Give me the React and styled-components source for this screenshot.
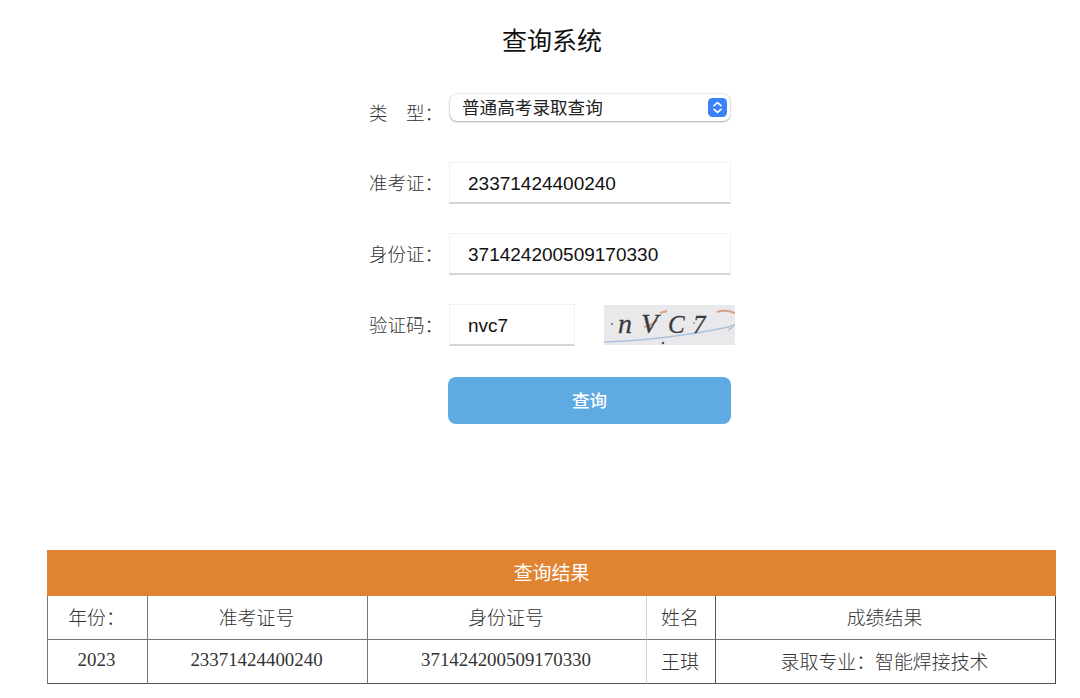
import { createGlobalStyle } from 'styled-components';
import styled from 'styled-components';

const GlobalStyle = createGlobalStyle`
  html, body {
    margin: 0;
    padding: 0;
    background: #fff;
    overflow: hidden;
  }
`;

const Page = styled.div`
  width: 1080px;
  height: 698px;
  overflow: hidden;
  display: flex;
  flex-direction: column;
  font-family: "Noto Sans CJK SC", sans-serif;
`;

const Title = styled.h1`
  margin: 0;
  padding-top: 22px;
  height: 94px;
  box-sizing: border-box;
  line-height: 34px;
  font-size: 25px;
  font-weight: 400;
  color: #111;
  text-align: center;
  padding-left: 24px;
`;

const Form = styled.form`
  margin: 0 0 0 369px;
  display: flex;
  flex-direction: column;
`;

const Row = styled.div`
  display: flex;
  align-items: center;
  height: ${p => p.$h}px;
  margin-bottom: ${p => p.$mb}px;
`;

const Label = styled.label`
  width: 80px;
  flex: none;
  font-size: 18.5px;
  font-weight: 300;
  color: #333;
  white-space: pre;
  position: relative;
  top: ${p => p.$top ?? -1}px;
`;

const SelectWrap = styled.div`
  position: relative;
  width: 280px;
  height: 27px;
  margin-left: 1px;
`;

const Select = styled.select`
  appearance: none;
  width: 100%;
  height: 100%;
  box-sizing: border-box;
  border: none;
  border-radius: 7px;
  background: #fff;
  box-shadow: 0 0 2px rgba(0, 0, 0, 0.22), 0 1px 2px rgba(0, 0, 0, 0.28);
  padding: 0 30px 3px 12px;
  font-family: "Noto Sans CJK SC", sans-serif;
  font-size: 17.6px;
  color: #222;
  outline: none;
`;

const SelectBadge = styled.svg`
  position: absolute;
  right: 3px;
  top: 4px;
  width: 19px;
  height: 19px;
`;

const Input = styled.input`
  width: ${p => p.$w}px;
  height: 42px;
  box-sizing: border-box;
  border: 1px solid #f1f1f1;
  border-bottom: 2px solid #d4d4d4;
  background: #fff;
  padding: 2px 0 0 18px;
  font-family: "Liberation Sans", sans-serif;
  font-size: 19px;
  color: #111;
  outline: none;
`;

const Captcha = styled.svg`
  width: 131px;
  height: 40px;
  margin-left: 29px;
  flex: none;
`;

const SubmitButton = styled.button`
  width: 283px;
  height: 47px;
  margin-left: 79px;
  padding: 0 0 2px;
  border: none;
  border-radius: 8px;
  background: #5eaae3;
  color: #fff;
  font-family: "Noto Sans CJK SC", sans-serif;
  font-size: 17.6px;
  font-weight: 500;
`;

const ResultTable = styled.table`
  margin: 126px 0 0 47px;
  width: 1009px;
  table-layout: fixed;
  border-collapse: separate;
  border-spacing: 0;
  font-family: "Liberation Serif", "Noto Sans CJK SC", serif;
  font-size: 18.9px;
  font-weight: 300;
  color: #333;
`;

const Banner = styled.th`
  height: 46px;
  padding: 0 0 4px;
  box-sizing: border-box;
  background: #e08432;
  color: #fff;
  font-family: "Noto Sans CJK SC", sans-serif;
  font-size: 18.9px;
  font-weight: 400;
`;

const Cell = styled.td`
  height: 40px;
  padding: 0 2px 3px 0;
  text-align: center;
  box-sizing: content-box;
  border-bottom: 1px solid ${p => (p.$last ? '#555' : '#777')};
  border-left: ${p => p.$left || '1px solid #777'};
  border-right: ${p => p.$right || 'none'};
`;

const CaptchaChar = styled.text`
  font-family: "Liberation Serif", serif;
  font-style: italic;
  font-size: ${p => p.$size}px;
  fill: #3a3a3a;
  stroke: #3a3a3a;
  stroke-width: 0.3px;
`;

const columns = [100, 220, 279, 69, 341];

const rows = [
  ['年份\uff1a', '准考证号', '身份证号', '姓名', '成绩结果'],
  ['2023', '23371424400240', '371424200509170330', '王琪', '录取专业\uff1a智能焊接技术'],
];

const cellBorder = i => {
  if (i === 3) return { $left: '1px solid #d2d2d2' };
  if (i === 4) return { $left: '1px solid #555', $right: '1px solid #444' };
  return {};
};

const captchaChars = [['n', 14, 28], ['V', 37, 28], ['C', 64, 25], ['7', 89, 25]];

const App = () => {
  return (
    <Page>
      <GlobalStyle />
      <Title>查询系统</Title>
      <Form onSubmit={e => e.preventDefault()}>
        <Row $h={27} $mb={41}>
          <Label $top={4}>{'类\u3000型\uff1a'}</Label>
          <SelectWrap>
            <Select defaultValue="gk">
              <option value="gk">普通高考录取查询</option>
            </Select>
            <SelectBadge viewBox="0 0 19 19">
              <rect width="19" height="19" rx="4.5" fill="#3b82f6" />
              <path d="M6 7.6 9.5 4.6 13 7.6M6 11.4l3.5 3 3.5-3" fill="none" stroke="#fff" strokeWidth="1.7" strokeLinecap="round" strokeLinejoin="round" />
            </SelectBadge>
          </SelectWrap>
        </Row>
        <Row $h={42} $mb={29}>
          <Label>{'准考证\uff1a'}</Label>
          <Input $w={282} readOnly value="23371424400240" />
        </Row>
        <Row $h={42} $mb={29}>
          <Label>{'身份证\uff1a'}</Label>
          <Input $w={282} readOnly value="371424200509170330" />
        </Row>
        <Row $h={42} $mb={31}>
          <Label>{'验证码\uff1a'}</Label>
          <Input $w={126} readOnly value="nvc7" />
          <Captcha viewBox="0 0 131 40">
            <rect width="131" height="40" fill="#e9e9ec" />
            <path d="M0 37C30 36 60 33 85 29s35-5 46-9" fill="none" stroke="#a9c4dc" strokeWidth="1.6" />
            <path d="M113 7c6-2 13-1 18 1" fill="none" stroke="#d3a184" strokeWidth="2" />
            <path d="M124 25c3-1 5-3 7-6" fill="none" stroke="#c9b7ac" strokeWidth="1.2" />
            <path d="M40 22c5-1 9-3 13-7M56 8c3-1 5-1 7-2" fill="none" stroke="#d9a583" strokeWidth="2" />
            <circle cx="8" cy="19" r="1" fill="#666" />
            <circle cx="59" cy="38" r="1.3" fill="#555" />
            <circle cx="90" cy="18" r="1" fill="#7aa" />
            {captchaChars.map(([c, x, size]) => (
              <CaptchaChar key={c} x={x} y={28} $size={size}>{c}</CaptchaChar>
            ))}
          </Captcha>
        </Row>
        <SubmitButton type="submit">查询</SubmitButton>
      </Form>
      <ResultTable>
        <colgroup>
          {columns.map((w, i) => <col key={i} style={{ width: w }} />)}
        </colgroup>
        <thead>
          <tr>
            <Banner colSpan={5}>查询结果</Banner>
          </tr>
        </thead>
        <tbody>
          {rows.map((row, r) => (
            <tr key={r}>
              {row.map((text, i) => (
                <Cell key={i} $last={r === 1} {...cellBorder(i)}>{text}</Cell>
              ))}
            </tr>
          ))}
        </tbody>
      </ResultTable>
    </Page>
  );
};

export default App;
